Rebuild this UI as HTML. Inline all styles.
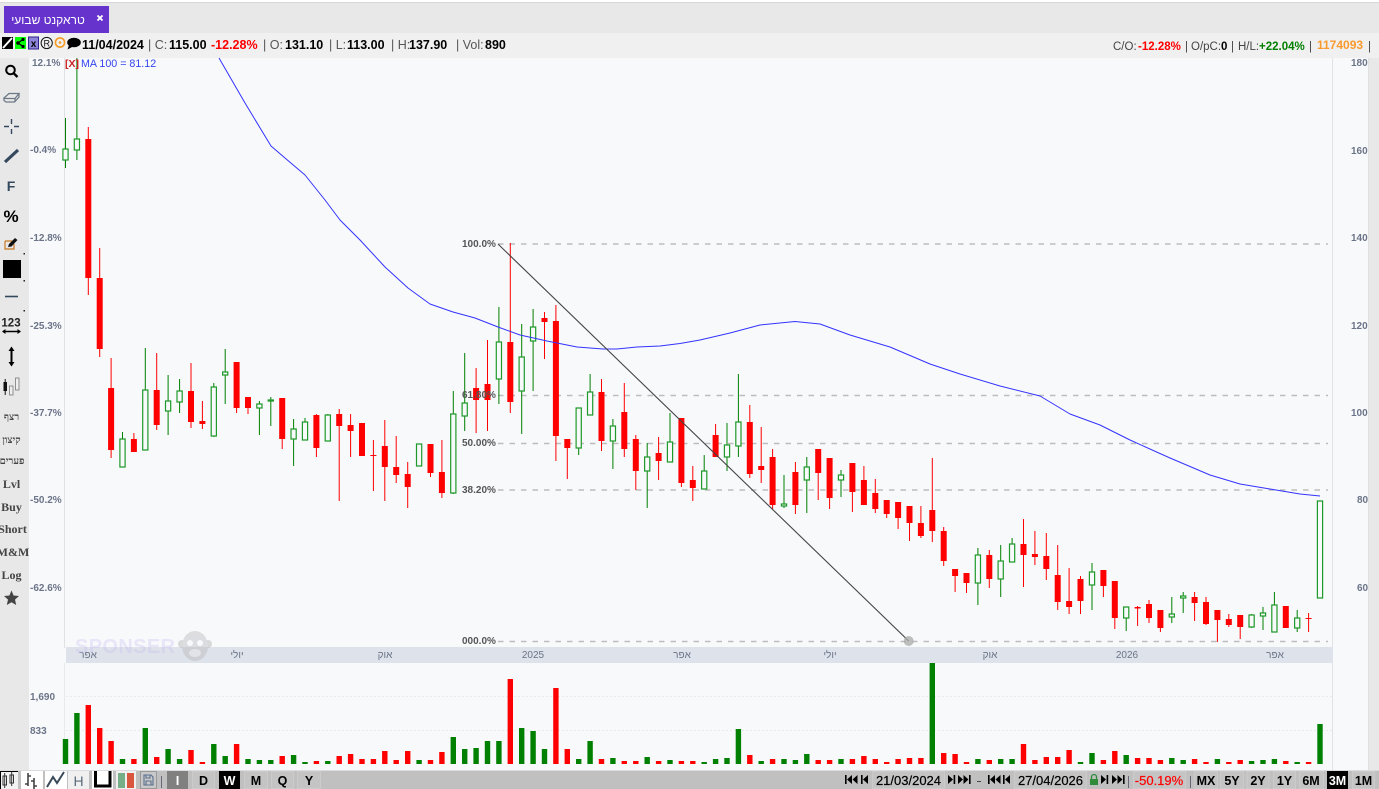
<!DOCTYPE html>
<html lang="he">
<head>
<meta charset="utf-8">
<title>Chart</title>
<style>
html,body{margin:0;padding:0;width:1379px;height:789px;overflow:hidden;background:#e8e8e8}
svg{display:block;position:absolute;left:0;top:0;filter:blur(.3px)}
text{font-family:"Liberation Sans","Noto Sans CJK JP",sans-serif}
.ax{font-size:10px;font-weight:700;fill:#6b7488}
.tm{font-size:10px;fill:#6b7488;text-anchor:middle}
.fib{font-size:10px;fill:#555;font-weight:700}
.hd{font-size:12.5px;fill:#555}
.hb{font-size:12.5px;font-weight:700;fill:#000}
.rt{font-size:11.5px;fill:#444}
.rb{font-size:11.5px;font-weight:700}
.sd{font-family:"Liberation Serif","Noto Serif CJK SC",serif;font-size:12px;font-weight:700;fill:#444;text-anchor:middle}
.sh{font-family:"Liberation Serif","Noto Serif CJK SC",serif;font-size:10px;font-weight:700;fill:#444;text-anchor:middle}
.bt{font-size:12.5px;font-weight:700;fill:#000;text-anchor:middle}
.dt{font-size:13px;fill:#000;text-anchor:middle;stroke:#000;stroke-width:.2}
</style>
</head>
<body>
<svg width="1379" height="789" viewBox="0 0 1379 789" xmlns="http://www.w3.org/2000/svg">
<!-- page -->
<rect width="1379" height="789" fill="#e8e8e8"/>
<rect y="0" width="1379" height="2" fill="#fff"/>
<rect y="2" width="1379" height="1" fill="#d8d8d8"/>
<rect y="33" width="1379" height="25" fill="#f0f0f0"/>
<rect x="29" y="58" width="1339" height="712" fill="#f8f9fb"/>
<rect x="64" y="58" width="1" height="590" fill="#dfe1e5"/>
<rect x="64" y="663" width="1" height="101" fill="#e8e9ec"/>
<rect x="1332" y="58" width="1" height="712" fill="#e0e2e6"/>
<rect x="1368" y="58" width="1" height="712" fill="#e0e0e0"/>

<!-- tab -->
<rect x="4" y="6" width="105" height="27" fill="#6633cc"/>
<text x="48" y="24" font-size="12" fill="#fff" text-anchor="middle">טראקנט שבועי</text>
<path d="M97.5 15.5L102.5 20.5M102.5 15.5L97.5 20.5" stroke="#fff" stroke-width="1.8"/>

<!-- top toolbar icons -->
<rect x="2" y="37" width="11" height="12" fill="#000"/>
<path d="M3 48L12 38" stroke="#fff" stroke-width="2"/>
<rect x="15" y="37" width="11" height="12" fill="#00ff00"/>
<path d="M18 43L23 39.5M18 43L23 46.5" stroke="#000" stroke-width="1.2"/>
<circle cx="18" cy="43" r="1.8"/><circle cx="23" cy="39.5" r="1.6"/><circle cx="23" cy="46.5" r="1.6"/>
<rect x="28.5" y="37" width="10" height="12" fill="#8d84d8" stroke="#2e1f8c"/>
<text x="33.5" y="47" font-size="10" font-family="Liberation Serif" font-weight="700" fill="#000" text-anchor="middle">x</text>
<circle cx="46.7" cy="43" r="5.6" fill="none" stroke="#111" stroke-width="1"/>
<text x="46.7" y="46.3" font-size="9" fill="#111" text-anchor="middle">R</text>
<circle cx="60" cy="42.5" r="4.6" fill="none" stroke="#f59a23" stroke-width="1.6"/><circle cx="60" cy="42.5" r="1.3" fill="#f59a23"/>
<ellipse cx="74" cy="42.5" rx="6.8" ry="4.8"/><path d="M69 45L67.5 49.5L73 46.5z"/>

<!-- top toolbar text -->
<text class="hb" x="82" y="49">11/04/2024</text>
<text class="hd" x="148" y="49">| C:</text>
<text class="hb" x="169" y="49">115.00</text>
<text class="hb" x="211" y="49" style="fill:#f00">-12.28%</text>
<text class="hd" x="263" y="49">| O:</text>
<text class="hb" x="285" y="49">131.10</text>
<text class="hd" x="329" y="49">| L:</text>
<text class="hb" x="347" y="49">113.00</text>
<text class="hd" x="391" y="49">| H:</text>
<text class="hb" x="409" y="49">137.90</text>
<text class="hd" x="456" y="49">| Vol:</text>
<text class="hb" x="485" y="49">890</text>

<text class="rt" x="1113" y="50">C/O:</text>
<text class="rb" x="1138" y="50" fill="#f00">-12.28%</text>
<text class="rt" x="1185" y="50">|</text>
<text class="rt" x="1191" y="50">O/pC:</text>
<text class="rb" x="1221" y="50" fill="#000">0</text>
<text class="rt" x="1231" y="50">|</text>
<text class="rt" x="1238" y="50">H/L:</text>
<text class="rb" x="1259" y="50" fill="#008000">+22.04%</text>
<text class="rt" x="1309" y="50">|</text>
<text x="1317" y="49" font-size="12" font-weight="700" fill="#f99a2e">1174093</text>
<text class="rt" x="1368" y="50">|</text>

<!-- left labels -->
<text class="ax" x="32" y="66">12.1%</text>
<text class="ax" x="30" y="153">-0.4%</text>
<text class="ax" x="30" y="241">-12.8%</text>
<text class="ax" x="30" y="329">-25.3%</text>
<text class="ax" x="30" y="416">-37.7%</text>
<text class="ax" x="30" y="503">-50.2%</text>
<text class="ax" x="30" y="591">-62.6%</text>
<text class="ax" x="30" y="700">1,690</text>
<text class="ax" x="30" y="734">833</text>

<!-- right labels -->
<text class="ax" x="1351" y="66">180</text>
<text class="ax" x="1351" y="154">160</text>
<text class="ax" x="1351" y="241">140</text>
<text class="ax" x="1351" y="329">120</text>
<text class="ax" x="1351" y="416">100</text>
<text class="ax" x="1357" y="503">80</text>
<text class="ax" x="1357" y="591">60</text>

<!-- time band -->
<rect x="66" y="647" width="1267" height="16" fill="#dee2ea"/>
<text class="tm" x="88" y="658">אפר</text>
<text class="tm" x="237" y="658">יולי</text>
<text class="tm" x="385" y="658">אוק</text>
<text class="tm" x="533" y="658">2025</text>
<text class="tm" x="682" y="658">אפר</text>
<text class="tm" x="830" y="658">יולי</text>
<text class="tm" x="990" y="658">אוק</text>
<text class="tm" x="1127" y="658">2026</text>
<text class="tm" x="1275" y="658">אפר</text>

<!-- watermark -->
<text x="75" y="653" font-size="20" font-weight="700" fill="#c4bdf0" opacity=".32" textLength="100">SPONSER</text>
<g opacity=".4">
<circle cx="182" cy="644" r="4" fill="#aaa"/><circle cx="208" cy="644" r="4" fill="#aaa"/>
<ellipse cx="195" cy="646" rx="13" ry="15" fill="#b4b4b8"/>
<circle cx="190" cy="643" r="3" fill="#f8f9fb"/><circle cx="200" cy="643" r="3" fill="#f8f9fb"/>
<ellipse cx="195" cy="653" rx="6" ry="4" fill="#e6e6e8"/>
</g>

<!-- volume gridlines -->
<path d="M66 696.5H1332M66 730.5H1332" stroke="#e9eaee" stroke-width="1" stroke-dasharray="2 2"/>

<!-- fib lines -->
<path d="M498 244H1328M498 395.5H1328M498 443.5H1328M498 490H1328M498 641.5H1328" stroke="#bdbdbd" stroke-width="1.4" stroke-dasharray="5.5 6" fill="none"/>

<!-- green wicks -->
<path fill="none" stroke="#008000" stroke-width="1" d="M65.5 118V168M76.9 58V160M122.5 432V467M145.3 348V450M168.1 375V435M179.6 379V413M213.8 383V437M225.2 349V404M259.4 401V435M270.8 397V426M293.6 419V466M305 418V440M327.8 414V441M453.3 391V494M464.7 353V431M498.9 307V404M521.7 324V434M533.1 309V391M578.7 408V455M590.1 374V415M612.9 419V469M647.2 443V508M670 413V462M704.2 455V489M727 423V471M738.4 374V457M784 475V508M806.8 457V513M841 470V497M977.9 548V605M1000.7 545V597M1012.1 538V562M1092 563V610M1126.2 607V631M1171.8 597V623M1183.2 592V613M1251.6 614V628M1263 607V630M1274.4 592V632M1297.2 610V632"/>
<!-- red wicks -->
<path fill="none" stroke="#f00" stroke-width="1" d="M88.3 127V295M99.7 248V357M111.1 358V458M133.9 433V452M156.7 353V430M191 363V428M202.4 401V429M236.6 362V413M248 397V414M282.2 398V449M316.4 414V457M339.2 409V501M350.6 414V457M373.4 440V491M384.8 420V501M396.2 436V483M407.7 462V508M430.5 444V477M441.9 440V498M476.1 368V433M487.5 340V431M510.3 243V413M544.5 312V359M555.9 305V461M567.3 439V479M601.5 379V451M624.3 383V457M635.8 435V490M658.6 437V480M681.4 418V487M692.8 466V501M715.6 424V457M749.8 405V478M761.2 427V483M772.6 449V509M795.4 462V514M818.2 449V500M829.6 458V509M852.4 463V512M863.9 466V505M875.3 479V513M886.7 500V518M898.1 502V529M909.5 506V541M920.9 506V538M932.3 458V542M943.7 527V566M955.1 569V592M966.5 573V593M989.3 550V588M1023.5 519V587M1034.9 531V565M1046.3 533V580M1057.7 545V610M1069.1 568V614M1080.5 576V614M1103.4 570V597M1114.8 581V629M1137.6 606V626M1149 600V623M1160.4 610V632M1194.6 592V621M1206 597V625M1217.4 610V642M1228.8 614V627M1240.2 615V639M1285.8 606V628M1308.6 613V632"/>
<!-- red bodies -->
<path fill="#f00" d="M85.3 139h6v139h-6zM96.7 278h6v71h-6zM108.1 388h6v62h-6zM130.9 439h6v13h-6zM153.7 390h6v35h-6zM188 391h6v31h-6zM199.4 421h6v3h-6zM233.6 362h6v46h-6zM245 397h6v11h-6zM279.2 398h6v41h-6zM313.4 415h6v33h-6zM336.2 414h6v12h-6zM347.6 425h6v6h-6zM359 423h6v33h-6zM370.4 455h6v1h-6zM381.8 446h6v21h-6zM393.2 467h6v8h-6zM404.7 474h6v13h-6zM427.5 444h6v29h-6zM438.9 472h6v21h-6zM473.1 388h6v12h-6zM484.5 384h6v16h-6zM507.3 342h6v60h-6zM541.5 318h6v4h-6zM552.9 321h6v115h-6zM564.3 439h6v9h-6zM598.5 392h6v49h-6zM621.3 412h6v37h-6zM632.8 439h6v32h-6zM655.6 453h6v8h-6zM678.4 418h6v65h-6zM689.8 480h6v8h-6zM712.6 435h6v22h-6zM746.8 422h6v52h-6zM758.2 466h6v4h-6zM769.6 457h6v48h-6zM792.4 472h6v33h-6zM815.2 449h6v24h-6zM826.6 458h6v40h-6zM849.4 463h6v29h-6zM860.9 480h6v25h-6zM872.3 493h6v16h-6zM883.7 500h6v14h-6zM895.1 502h6v16h-6zM906.5 506h6v17h-6zM917.9 523h6v13h-6zM929.3 510h6v21h-6zM940.7 531h6v30h-6zM952.1 569h6v7h-6zM963.5 573h6v10h-6zM986.3 555h6v24h-6zM1020.5 544h6v11h-6zM1031.9 554h6v3h-6zM1043.3 556h6v13h-6zM1054.7 575h6v27h-6zM1066.1 601h6v6h-6zM1077.5 579h6v22h-6zM1100.4 570h6v16h-6zM1111.8 581h6v37h-6zM1134.6 607h6v1.5h-6zM1146 604h6v14h-6zM1157.4 610h6v18h-6zM1191.6 597h6v6h-6zM1203 602h6v22h-6zM1214.4 610h6v10h-6zM1225.8 619h6v6h-6zM1237.2 615h6v12h-6zM1282.8 606h6v22h-6zM1305.6 618h6v1h-6z"/>
<!-- green bodies -->
<path fill="#f8f9fb" stroke="#1f9a2a" stroke-width="1.2" d="M62.9 149h5.2v11h-5.2zM74.3 139h5.2v11h-5.2zM119.9 439h5.2v28h-5.2zM142.7 390h5.2v60h-5.2zM165.5 401h5.2v10h-5.2zM177 391h5.2v11h-5.2zM211.2 387h5.2v49h-5.2zM222.6 372h5.2v3h-5.2zM256.8 404h5.2v4h-5.2zM268.2 400h5.2v1h-5.2zM291 429h5.2v10h-5.2zM302.4 422h5.2v18h-5.2zM325.2 415h5.2v26h-5.2zM416.5 444h5.2v22h-5.2zM450.7 414h5.2v79h-5.2zM462.1 403h5.2v13h-5.2zM496.3 342h5.2v37h-5.2zM519.1 357h5.2v34h-5.2zM530.5 327h5.2v14h-5.2zM576.1 408h5.2v40h-5.2zM587.5 392h5.2v23h-5.2zM610.3 426h5.2v15h-5.2zM644.6 457h5.2v14h-5.2zM667.4 442h5.2v20h-5.2zM701.6 471h5.2v18h-5.2zM724.4 445h5.2v12h-5.2zM735.8 422h5.2v24h-5.2zM781.4 504h5.2v2h-5.2zM804.2 467h5.2v13h-5.2zM838.4 475h5.2v5h-5.2zM975.3 555h5.2v28h-5.2zM998.1 561h5.2v18h-5.2zM1009.5 544h5.2v18h-5.2zM1089.4 572h5.2v13h-5.2zM1123.6 607h5.2v11h-5.2zM1169.2 614h5.2v3h-5.2zM1180.6 596h5.2v2h-5.2zM1249 615h5.2v12h-5.2zM1260.4 613h5.2v3h-5.2zM1271.8 605h5.2v27h-5.2zM1294.6 618h5.2v10h-5.2zM1317.4 501h5.2v97h-5.2z"/>

<!-- MA -->
<polyline fill="none" stroke="#3333ff" stroke-width="1" stroke-linejoin="round" points="219,58 245,103 271,146 285,158 305,175 325,200 340,220 360,240 385,267 408,288 430,304 453,312 475,318 498,327 520,335 547,341 577,347 603,349 617,349 637,347 660,346 680,343.5 700,340 730,333 760,325 795,321.5 820,324 850,335 890,347 930,364 960,374 1000,386 1040,396 1070,414 1100,425 1130,440 1170,458 1210,475 1240,484 1270,489 1300,494 1320,496"/>
<text x="65" y="67" font-size="10.5" font-weight="700" fill="#cc2222">[X]</text>
<text x="81" y="67" font-size="10.7" fill="#3344ee">MA 100 = 81.12</text>

<!-- fib diag + labels -->
<path d="M498 244L908.7 641" stroke="#444" stroke-width="1.1" fill="none"/>
<circle cx="908.7" cy="641" r="5" fill="#aaa" opacity=".75"/>
<text class="fib" x="462" y="247">100.0%</text>
<text class="fib" x="462" y="398">61.80%</text>
<text class="fib" x="462" y="446">50.00%</text>
<text class="fib" x="462" y="493">38.20%</text>
<text class="fib" x="462" y="644">000.0%</text>

<!-- volume red -->
<path fill="#f00" d="M85.6 705h5.4V764h-5.4zM97 728h5.4V764h-5.4zM108.4 741h5.4V764h-5.4zM131.2 759h5.4V764h-5.4zM154 757h5.4V764h-5.4zM188.3 750h5.4V764h-5.4zM199.7 762h5.4V764h-5.4zM233.9 744h5.4V764h-5.4zM279.5 756h5.4V764h-5.4zM313.7 761h5.4V764h-5.4zM336.5 756h5.4V764h-5.4zM347.9 754h5.4V764h-5.4zM359.3 759h5.4V764h-5.4zM370.7 759h5.4V764h-5.4zM382.1 751h5.4V764h-5.4zM393.5 760h5.4V764h-5.4zM405 751h5.4V764h-5.4zM427.8 760h5.4V764h-5.4zM439.2 752h5.4V764h-5.4zM507.6 679h5.4V764h-5.4zM553.2 688h5.4V764h-5.4zM564.6 749h5.4V764h-5.4zM598.8 759h5.4V764h-5.4zM621.6 761h5.4V764h-5.4zM633.1 761h5.4V764h-5.4zM655.9 761h5.4V764h-5.4zM678.7 761h5.4V764h-5.4zM690.1 761h5.4V764h-5.4zM747.1 755h5.4V764h-5.4zM769.9 759h5.4V764h-5.4zM815.5 760h5.4V764h-5.4zM826.9 760h5.4V764h-5.4zM849.7 759h5.4V764h-5.4zM861.2 756h5.4V764h-5.4zM872.6 759h5.4V764h-5.4zM884 762h5.4V764h-5.4zM895.4 759h5.4V764h-5.4zM906.8 758h5.4V764h-5.4zM918.2 758h5.4V764h-5.4zM941 753h5.4V764h-5.4zM952.4 754h5.4V764h-5.4zM963.8 762h5.4V764h-5.4zM986.6 760h5.4V764h-5.4zM1020.8 744h5.4V764h-5.4zM1032.2 760h5.4V764h-5.4zM1043.6 757h5.4V764h-5.4zM1055 757h5.4V764h-5.4zM1066.4 750h5.4V764h-5.4zM1100.7 760h5.4V764h-5.4zM1112.1 751h5.4V764h-5.4zM1134.9 758h5.4V764h-5.4zM1146.3 758h5.4V764h-5.4zM1157.7 760h5.4V764h-5.4zM1191.9 759h5.4V764h-5.4zM1203.3 762h5.4V764h-5.4zM1226.1 762h5.4V764h-5.4zM1237.5 760h5.4V764h-5.4zM1283.1 761h5.4V764h-5.4zM1305.9 762h5.4V764h-5.4z"/>
<!-- volume green -->
<path fill="#008000" d="M62.8 739h5.4V764h-5.4zM74.2 713h5.4V764h-5.4zM119.8 759h5.4V764h-5.4zM142.6 728h5.4V764h-5.4zM165.4 749h5.4V764h-5.4zM176.9 759h5.4V764h-5.4zM211.1 744h5.4V764h-5.4zM222.5 756h5.4V764h-5.4zM245.3 759h5.4V764h-5.4zM256.7 760h5.4V764h-5.4zM268.1 760h5.4V764h-5.4zM290.9 755h5.4V764h-5.4zM302.3 762h5.4V764h-5.4zM325.1 761h5.4V764h-5.4zM416.4 760h5.4V764h-5.4zM450.6 737h5.4V764h-5.4zM462 749h5.4V764h-5.4zM473.4 748h5.4V764h-5.4zM484.8 741h5.4V764h-5.4zM496.2 741h5.4V764h-5.4zM519 728h5.4V764h-5.4zM530.4 731h5.4V764h-5.4zM541.8 749h5.4V764h-5.4zM576 759h5.4V764h-5.4zM587.4 741h5.4V764h-5.4zM610.2 758h5.4V764h-5.4zM644.5 757h5.4V764h-5.4zM667.3 760h5.4V764h-5.4zM701.5 762h5.4V764h-5.4zM712.9 759h5.4V764h-5.4zM724.3 758h5.4V764h-5.4zM735.7 729h5.4V764h-5.4zM758.5 761h5.4V764h-5.4zM781.3 759h5.4V764h-5.4zM792.7 760h5.4V764h-5.4zM804.1 754h5.4V764h-5.4zM838.3 759h5.4V764h-5.4zM929.6 663h5.4V764h-5.4zM975.2 759h5.4V764h-5.4zM998 759h5.4V764h-5.4zM1009.4 759h5.4V764h-5.4zM1077.8 762h5.4V764h-5.4zM1089.3 753h5.4V764h-5.4zM1123.5 755h5.4V764h-5.4zM1169.1 758h5.4V764h-5.4zM1180.5 760h5.4V764h-5.4zM1214.7 759h5.4V764h-5.4zM1248.9 761h5.4V764h-5.4zM1260.3 760h5.4V764h-5.4zM1271.7 759h5.4V764h-5.4zM1294.5 762h5.4V764h-5.4zM1317.3 724h5.4V764h-5.4z"/>

<!-- sidebar icons -->
<circle cx="10.5" cy="70" r="4.3" fill="none" stroke="#000" stroke-width="2"/>
<path d="M13.6 73.2L17.5 77" stroke="#000" stroke-width="2.4"/>
<path d="M4 98L9 93.5H19L15 98.5H6zM4 98V100.5L6 102H14.5L19 97V93.5M15 98.5V102" fill="#e8e8e8" stroke="#6b7784" stroke-width="1.2"/>
<path d="M11.5 119V124M11.5 129V134M4 126.5H9M14 126.5H19" stroke="#34495e" stroke-width="1.4"/>
<path d="M5 162L18 150" stroke="#34495e" stroke-width="3.2"/>
<text x="11" y="191" font-size="14" font-weight="700" fill="#34495e" text-anchor="middle">F</text>
<text x="11" y="222" font-size="17" font-weight="700" fill="#000" text-anchor="middle">%</text>
<path d="M5 241H12M5 241V249H14V244" fill="none" stroke="#c87a20" stroke-width="1.2"/>
<path d="M8 247L9 244L15 238L17.5 240L11.5 246.5z" fill="#111"/>
<rect x="3" y="260" width="18" height="18"/>
<rect x="23.5" y="253" width="1.5" height="1.5" fill="#222"/>
<rect x="23.5" y="280" width="1.5" height="1.5" fill="#222"/>
<rect x="23.5" y="310" width="1.5" height="1.5" fill="#222"/>
<path d="M5 296.5H18" stroke="#34495e" stroke-width="1.6"/>
<text x="11" y="326.5" font-size="11.5" font-weight="700" fill="#222" text-anchor="middle">123</text>
<path d="M3 331.5H20" stroke="#000" stroke-width="1.6"/>
<path d="M5.5 329L2 331.5L5.5 334zM17.5 329L21 331.5L17.5 334z" fill="#000"/>
<path d="M11.5 349V364" stroke="#000" stroke-width="2"/>
<path d="M8.5 351L11.5 346.5L14.5 351zM8.5 362L11.5 366.5L14.5 362z" fill="#000"/>
<rect x="3.5" y="382" width="3.5" height="9" fill="#111"/><path d="M5.2 379V395" stroke="#111"/>
<rect x="9.5" y="386" width="3.5" height="9" fill="#eee" stroke="#777" stroke-width=".8"/>
<rect x="15.5" y="378" width="3.5" height="12" fill="#eee" stroke="#777" stroke-width=".8"/>

<text class="sh" x="11.5" y="420">רצף</text>
<text class="sh" x="11.5" y="443">קיצון</text>
<text class="sh" x="12" y="464">פערים</text>
<text class="sd" x="11.5" y="488">Lvl</text>
<text class="sd" x="11.5" y="511">Buy</text>
<text class="sd" x="12.5" y="533">Short</text>
<text class="sd" x="13" y="556">M&amp;M</text>
<text class="sd" x="11.5" y="579">Log</text>
<path d="M11.5 590.5L13.6 595.5L19 596L15 599.6L16.2 605L11.5 602.2L6.8 605L8 599.6L4 596L9.4 595.5z" fill="#444"/>

<!-- bottom toolbar -->
<rect y="770" width="1379" height="1" fill="#dcdcdc"/>
<rect y="771" width="1379" height="18" fill="#c0c0c0"/>
<rect x="0" y="771" width="18" height="18" fill="#f2f2f2"/>
<path d="M0.5 789V771.5H18" fill="none" stroke="#000"/>
<rect x="3" y="776" width="3.5" height="9" fill="#fff" stroke="#333"/><path d="M4.7 773V788" stroke="#333"/>
<rect x="10" y="775" width="3.5" height="8" fill="#fff" stroke="#333"/><path d="M11.7 772V786" stroke="#333"/>
<rect x="21" y="771" width="22" height="18" fill="#fff"/>
<path d="M28 773V786M28 776H31M28 784H25M34 778V789M34 781H31M34 786H37" fill="none" stroke="#444" stroke-width="1.6"/>
<rect x="45" y="771" width="22" height="18" fill="#fff"/>
<path d="M47 787L53 777L57 783L64 772" fill="none" stroke="#3a4a5a" stroke-width="2"/>
<rect x="68" y="771" width="21" height="18" fill="#f0f0f0"/>
<text x="78.5" y="786" font-size="14" fill="#5a6a7a" text-anchor="middle">H</text>
<rect x="92" y="771" width="21" height="18" fill="#fff"/>
<path d="M95.5 771V786H110V771" fill="none" stroke="#000" stroke-width="3"/>
<rect x="116" y="771" width="20" height="18" fill="#f0f0f0"/>
<rect x="118" y="773" width="7" height="15" fill="#76ae88"/>
<rect x="127" y="773" width="7" height="15" fill="#d9563f"/>
<rect x="140.5" y="771.5" width="16" height="17" fill="#c8c8c8" stroke="#999"/>
<path d="M144 775H151L153 777V785H144zM146 775V778H150V775M146 785V781H151V785" fill="none" stroke="#5a6f90" stroke-width="1.1"/>
<rect x="161" y="776" width="1" height="12" fill="#667"/>
<rect x="167" y="771" width="21" height="18" fill="#808080"/>
<text x="177.5" y="785" font-size="13" font-weight="700" fill="#fff" text-anchor="middle">I</text>
<rect x="192.5" y="771.5" width="22" height="17" fill="#c4c4c4" stroke="#cbcbcb"/>
<text class="bt" x="203.5" y="785">D</text>
<rect x="219" y="771" width="21" height="18" fill="#000"/>
<text class="bt" x="229.5" y="785" style="fill:#fff">W</text>
<rect x="244.5" y="771.5" width="23" height="17" fill="#c4c4c4" stroke="#cbcbcb"/>
<text class="bt" x="256" y="785">M</text>
<rect x="271.5" y="771.5" width="22" height="17" fill="#c4c4c4" stroke="#cbcbcb"/>
<text class="bt" x="282.5" y="785">Q</text>
<rect x="297.5" y="771.5" width="23" height="17" fill="#c4c4c4" stroke="#cbcbcb"/>
<text class="bt" x="309" y="785">Y</text>

<!-- bottom right -->
<g fill="#000">
<path d="M845 775h1.6v9H845zM852 775v9l-5-4.5zM857.5 775v9l-5-4.5z"/>
<path d="M861 775h1.6v9H861zM868 775v9l-5-4.5z"/>
<path d="M948 775v9l5-4.5zM953.6 775h1.6v9h-1.6z"/>
<path d="M958 775v9l5-4.5zM963.5 775v9l5-4.5zM969 775h1.6v9H969z"/>
<path d="M988 775h1.6v9H988zM995 775v9l-5-4.5zM1000.5 775v9l-5-4.5z"/>
<path d="M1003 775h1.6v9H1003zM1010 775v9l-5-4.5z"/>
<path d="M1101 775v9l5-4.5zM1106.6 775h1.6v9h-1.6z"/>
<path d="M1112 775v9l5-4.5zM1117.5 775v9l5-4.5zM1123 775h1.6v9H1123z"/>
</g>
<rect x="872.5" y="771.5" width="72" height="17" fill="#c4c4c4" stroke="#cbcbcb"/>
<text class="dt" x="908.5" y="785">21/03/2024</text>
<rect x="977" y="781" width="4" height="1" fill="#444"/>
<rect x="1014.5" y="771.5" width="72" height="17" fill="#c4c4c4" stroke="#cbcbcb"/>
<text class="dt" x="1050.5" y="785">27/04/2026</text>
<rect x="1090" y="779" width="8" height="6" fill="#2e8b3a"/>
<path d="M1091.5 779V777a2.5 2.5 0 0 1 5 0V779" fill="none" stroke="#2e8b3a" stroke-width="1.3"/>
<rect x="1128" y="776" width="1" height="12" fill="#667"/>
<rect x="1133.5" y="771.5" width="52" height="17" fill="#c4c4c4" stroke="#cbcbcb"/>
<text class="dt" x="1159" y="785" style="fill:#f00;stroke:#f00">-50.19%</text>
<rect x="1190" y="776" width="1" height="12" fill="#667"/>
<rect x="1194.5" y="771.5" width="23" height="17" fill="#c4c4c4" stroke="#cbcbcb"/>
<text class="bt" x="1206" y="785">MX</text>
<rect x="1220.5" y="771.5" width="23" height="17" fill="#c4c4c4" stroke="#cbcbcb"/>
<text class="bt" x="1232" y="785">5Y</text>
<rect x="1247" y="771.5" width="22" height="17" fill="#c4c4c4" stroke="#cbcbcb"/>
<text class="bt" x="1258" y="785">2Y</text>
<rect x="1273.5" y="771.5" width="22" height="17" fill="#c4c4c4" stroke="#cbcbcb"/>
<text class="bt" x="1284.5" y="785">1Y</text>
<rect x="1299.5" y="771.5" width="24" height="17" fill="#c4c4c4" stroke="#cbcbcb"/>
<text class="bt" x="1311" y="785">6M</text>
<rect x="1327" y="771" width="21" height="18" fill="#000"/>
<text class="bt" x="1337.5" y="785" style="fill:#fff">3M</text>
<rect x="1352.5" y="771.5" width="22" height="17" fill="#c4c4c4" stroke="#cbcbcb"/>
<text class="bt" x="1363.5" y="785">1M</text>
</svg>
</body>
</html>
